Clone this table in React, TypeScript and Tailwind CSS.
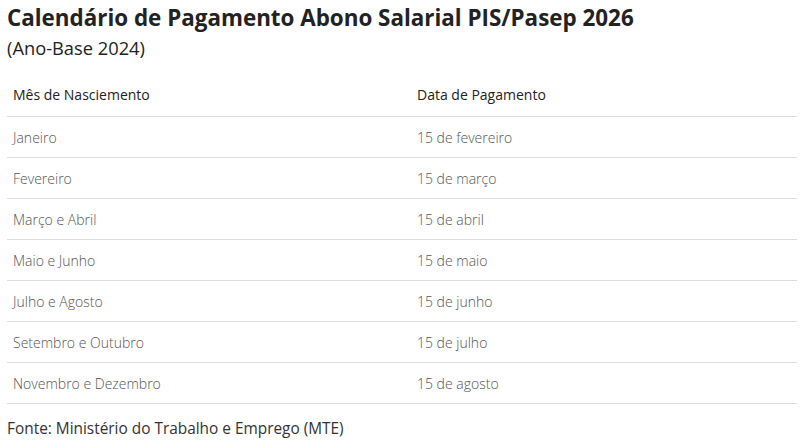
const rows = [
  ['Janeiro', '15 de fevereiro'],
  ['Fevereiro', '15 de março'],
  ['Março e Abril', '15 de abril'],
  ['Maio e Junho', '15 de maio'],
  ['Julho e Agosto', '15 de junho'],
  ['Setembro e Outubro', '15 de julho'],
  ['Novembro e Dezembro', '15 de agosto'],
];

export default function App() {
  return (
    <div className="w-[806px] h-[446px] bg-white px-[7px] pt-[3px] font-['Open_Sans',sans-serif] text-[#222]">
      <h1 className="text-[22.4px] leading-[30px] font-bold text-[#222]">
        Calendário de Pagamento Abono Salarial PIS/Pasep 2026
      </h1>
      <p className="mt-[2px] text-[18.3px] leading-[26px] text-[#222]">(Ano-Base 2024)</p>

      {/* tabela */}
      <div className="mt-[12px] w-[790px]">
        <div className="grid grid-cols-[404px_1fr] h-[44px] items-center border-b border-[#ddd] text-[14px] text-[#222]">
          <div className="pl-[6px]">Mês de Nasciemento</div>
          <div className="pl-[6px]">Data de Pagamento</div>
        </div>
        {rows.map(([mes, data]) => (
          <div
            key={mes}
            className="grid grid-cols-[404px_1fr] h-[41px] items-center border-b border-[#ddd] text-[14px] font-light text-[#555]"
          >
            <div className="pl-[6px]">{mes}</div>
            <div className="pl-[6px]">{data}</div>
          </div>
        ))}
      </div>

      <p className="mt-[14px] text-[15.4px] leading-[22px] text-[#333]">
        Fonte: Ministério do Trabalho e Emprego (MTE)
      </p>
    </div>
  );
}
